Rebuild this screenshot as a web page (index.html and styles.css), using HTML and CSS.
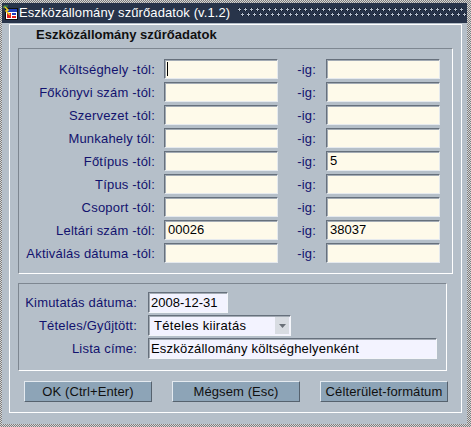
FILE: index.html
```html
<!DOCTYPE html>
<html lang="hu">
<head>
<meta charset="utf-8">
<title>Eszközállomány szűrőadatok</title>
<link rel="stylesheet" href="styles.css">
</head>
<body>
<div class="window">
  <div class="titlebar">
    <svg class="appicon" width="16" height="16" viewBox="0 0 16 16">
      <rect x="2.5" y="3.5" width="12" height="11" fill="#ffffff" stroke="#101010"/>
      <rect x="3" y="4" width="11" height="3" fill="#2040c0"/>
      <rect x="4" y="8" width="4" height="5" fill="#e02020"/>
      <rect x="9" y="8" width="4" height="2" fill="#2040c0"/>
      <rect x="9" y="11" width="4" height="2" fill="#e02020"/>
      <path d="M1 1 L5 5 L3 6 L7 10" fill="none" stroke="#f0d020" stroke-width="1.5"/>
      <path d="M0 3 Q2 0 5 1" fill="none" stroke="#30a050" stroke-width="1"/>
    </svg>
    <span class="title">Eszközállomány szűrőadatok (v.1.2)</span>
    <div class="grip"></div>
  </div>
  <div class="content">
    <div class="panel">
      <div class="heading">Eszközállomány szűrőadatok</div>
      <div class="group range">
        <label>Költséghely -tól:</label><div class="field"><span class="caret"></span></div><label class="ig">-ig:</label><div class="field"></div>
        <label>Főkönyvi szám -tól:</label><div class="field"></div><label class="ig">-ig:</label><div class="field"></div>
        <label>Szervezet -tól:</label><div class="field"></div><label class="ig">-ig:</label><div class="field"></div>
        <label>Munkahely tól:</label><div class="field"></div><label class="ig">-ig:</label><div class="field"></div>
        <label>Főtípus -tól:</label><div class="field"></div><label class="ig">-ig:</label><div class="field">5</div>
        <label>Típus -tól:</label><div class="field"></div><label class="ig">-ig:</label><div class="field"></div>
        <label>Csoport -tól:</label><div class="field"></div><label class="ig">-ig:</label><div class="field"></div>
        <label>Leltári szám -tól:</label><div class="field">00026</div><label class="ig">-ig:</label><div class="field">38037</div>
        <label>Aktiválás dátuma -tól:</label><div class="field"></div><label class="ig">-ig:</label><div class="field"></div>
      </div>
      <div class="group options">
        <label>Kimutatás dátuma:</label><div class="box date">2008-12-31</div>
        <label>Tételes/Gyűjtött:</label><div class="box select"><span class="seltext">Tételes kiiratás</span><span class="arrow"><svg width="7" height="4" viewBox="0 0 7 4"><path d="M0 0 H7 L3.5 4 Z" fill="#6a7078"/></svg></span></div>
        <label>Lista címe:</label><div class="box title-field">Eszközállomány költséghelyenként</div>
      </div>
      <div class="buttons">
        <div class="btn">OK (Ctrl+Enter)</div>
        <div class="btn">Mégsem (Esc)</div>
        <div class="btn">Célterület-formátum</div>
      </div>
    </div>
  </div>
</div>
</body>
</html>
```
FILE: styles.css
```css
html, body {
  margin: 0;
  padding: 0;
}
body {
  width: 471px;
  height: 427px;
  overflow: hidden;
  background: repeating-conic-gradient(#7c7c7c 0 25%, #d6d6d6 0 50%) 0 0 / 2px 2px;
  font-family: "Liberation Sans", Arial, sans-serif;
  font-size: 13px;
}
.window {
  margin: 3px 4px 3px 2px;
  height: 421px;
  display: flex;
  flex-direction: column;
}
.titlebar {
  height: 20px;
  background: #28344a;
  display: flex;
  align-items: center;
  color: #ffffff;
}
.appicon {
  margin-left: 1px;
  flex: none;
}
.title {
  line-height: 20px;
  white-space: nowrap;
  letter-spacing: 0.1px;
}
.grip {
  flex: 1;
  align-self: flex-start;
  margin: 5px 1px 0 8px;
  height: 10px;
  background-image:
    radial-gradient(circle at 1.5px 1.5px, #b4bece 1.1px, #0e1624 1.3px, #0e1624 1.8px, transparent 2px),
    radial-gradient(circle at 1.5px 1.5px, #b4bece 1.1px, #0e1624 1.3px, #0e1624 1.8px, transparent 2px);
  background-size: 6px 10px, 6px 10px;
  background-position: 0 0, 3px 5px;
  background-repeat: repeat-x, repeat-x;
}
.content {
  flex: 1;
  background: #b5bfc9;
  padding: 1px 5px 11px 7px;
  display: flex;
}
.panel {
  flex: 1;
  border: 1px solid #ffffff;
  display: flex;
  flex-direction: column;
}
.heading {
  font-weight: bold;
  color: #101010;
  padding: 1px 0 0 26px;
  line-height: 18px;
  height: 18px;
  margin-bottom: 4px;
}
.group {
  box-sizing: border-box;
  margin-left: 8px;
  border: 1px solid;
  border-color: #7e8791 #ffffff #ffffff #7e8791;
  display: grid;
  align-items: center;
}
.range {
  width: 435px;
  padding: 10px 0;
  grid-template-columns: 145px 114px 48px 114px;
  grid-auto-rows: 20px;
  row-gap: 3px;
}
.group label {
  color: #12126e;
  text-align: right;
  padding-right: 9px;
  white-space: nowrap;
  letter-spacing: 0.2px;
}
.range label.ig {
  padding-right: 10px;
}
.field {
  box-sizing: border-box;
  height: 20px;
  background: #fefaea;
  border: 1px solid;
  border-color: #66707c #e6eaee #e6eaee #66707c;
  box-shadow: inset 1px 1px 0 #a3abb4;
  padding-left: 3px;
  line-height: 18px;
  color: #000;
  position: relative;
}
.caret {
  position: absolute;
  left: 2px;
  top: 2px;
  width: 1px;
  height: 14px;
  background: #000;
}
.options {
  width: 429px;
  margin-top: 9px;
  padding: 8px 0 11px;
  grid-template-columns: 129px auto;
  grid-auto-rows: 21px;
  row-gap: 2px;
  justify-items: start;
}
.options label {
  padding-right: 11px;
  justify-self: stretch;
}
.box {
  box-sizing: border-box;
  height: 21px;
  border: 1px solid;
  border-color: #66707c #f4f6fa #f4f6fa #66707c;
  box-shadow: inset 1px 1px 0 #a3abb4;
  background: #f3f3ff;
  color: #000;
  line-height: 19px;
  padding-left: 2px;
  white-space: nowrap;
}
.date {
  width: 80px;
}
.select {
  width: 143px;
  display: flex;
  padding-left: 5px;
  letter-spacing: 0.3px;
}
.seltext {
  flex: 1;
}
.arrow {
  width: 14px;
  margin: 1px 1px 1px 0;
  background: #d8dce2;
  display: flex;
  align-items: center;
  justify-content: center;
}
.title-field {
  width: 289px;
  letter-spacing: 0.2px;
}
.buttons {
  display: flex;
  gap: 20px;
  margin: 10px 0 0 14px;
}
.btn {
  box-sizing: border-box;
  width: 128px;
  height: 21px;
  background: #8da4b7;
  border: 1px solid;
  border-color: #e4eaf0 #56626e #56626e #e4eaf0;
  color: #101010;
  text-align: center;
  line-height: 19px;
  letter-spacing: 0.1px;
}
```
